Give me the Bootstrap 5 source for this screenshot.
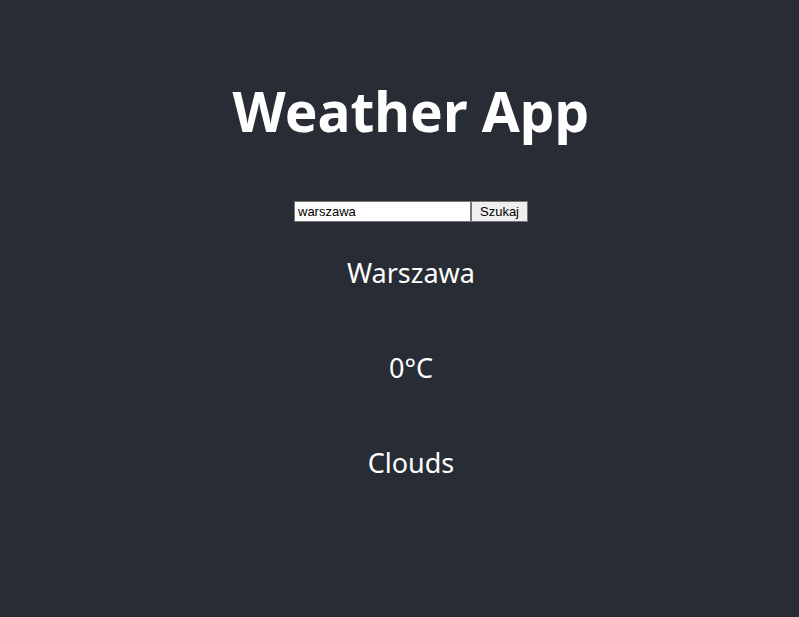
<!DOCTYPE html>
<html lang="pl">
<head>
<meta charset="utf-8">
<meta name="viewport" content="width=device-width, initial-scale=1">
<title>Weather App</title>
<link rel="stylesheet" href="https://cdn.jsdelivr.net/npm/bootstrap@5.3.0/dist/css/bootstrap.min.css">
<style>
body { background: #282c34; font-family: "Noto Sans", "Open Sans", sans-serif; }
.weather { padding: 68px 0 64px 23px; color: #fff; }
.weather-title { font-size: 55px; line-height: 86px; font-weight: 700; margin-bottom: 47px; }
.search-form { font: 13px/15px "Liberation Sans", Arial, sans-serif; margin-bottom: 32px; }
.search-input { width: 177px; height: 21px; padding: 2px 3px; border: 1px solid #767676; color: #000; background: #fff; }
.search-button { width: 57px; height: 21px; padding: 2px 0; border: 1px solid #767676; color: #000; background: #efefef; }
.weather-line { font-size: 27px; line-height: 38px; margin-bottom: 57px; }
</style>
</head>
<body>
<main class="weather d-flex flex-column align-items-center text-center">
  <h1 class="weather-title">Weather App</h1>
  <form class="search-form d-flex" onsubmit="return false">
    <input class="search-input" type="text" value="warszawa" aria-label="Miasto">
    <button class="search-button" type="submit">Szukaj</button>
  </form>
  <p class="weather-line">Warszawa</p>
  <p class="weather-line">0°C</p>
  <p class="weather-line mb-0">Clouds</p>
</main>
<script src="https://cdn.jsdelivr.net/npm/bootstrap@5.3.0/dist/js/bootstrap.bundle.min.js"></script>
</body>
</html>
